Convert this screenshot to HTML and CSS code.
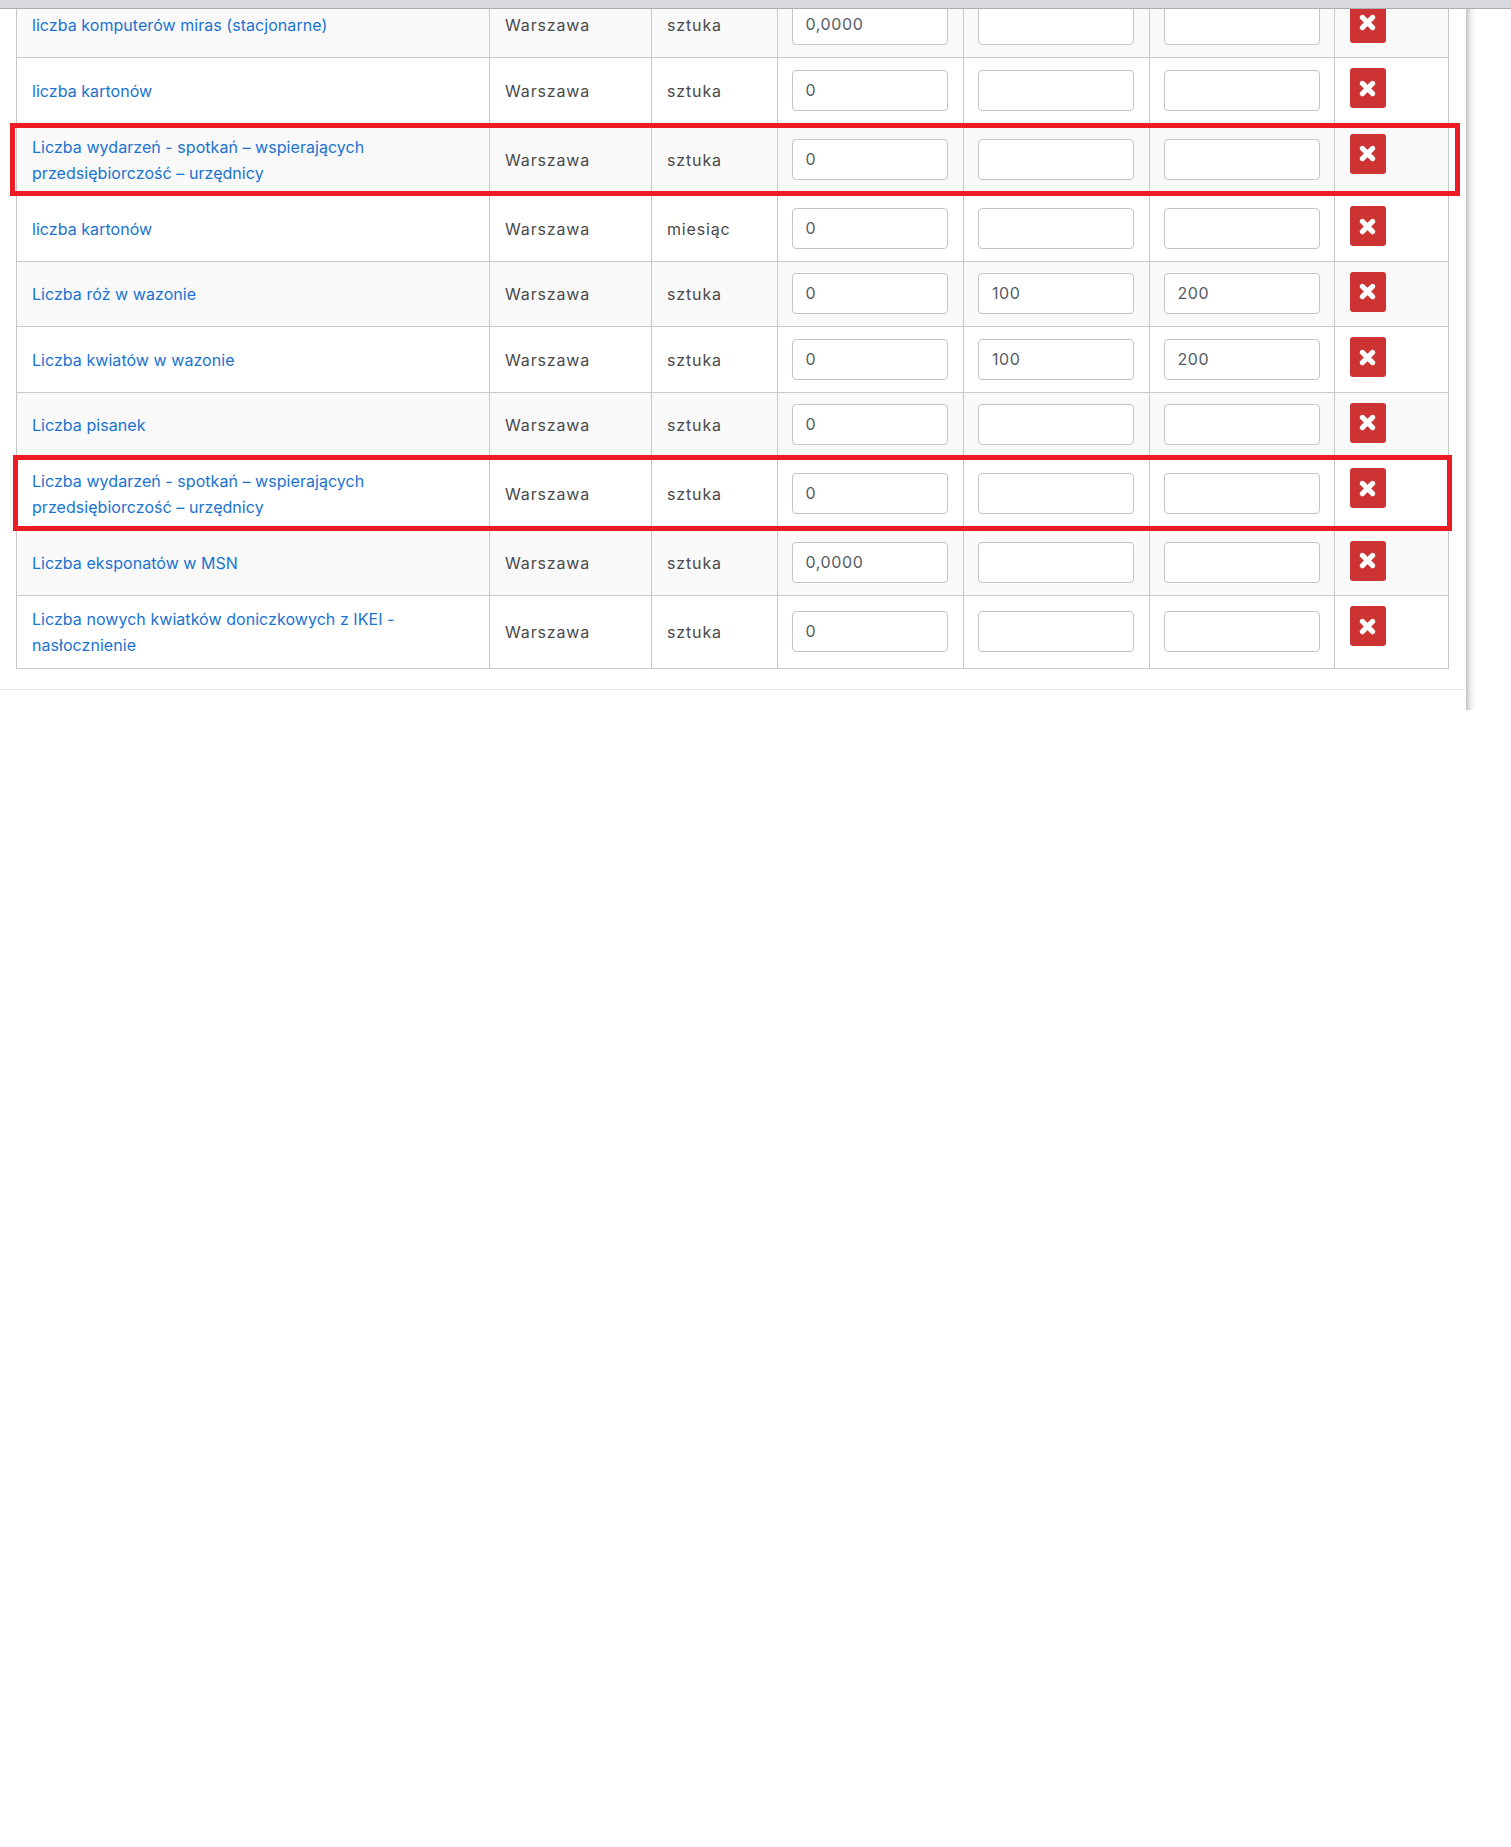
FILE: index.html
```html
<!DOCTYPE html>
<html lang="pl">
<head>
<meta charset="utf-8">
<title>Wskaźniki</title>
<link rel="stylesheet" href="styles.css">
</head>
<body>
<svg class="defs" width="0" height="0" aria-hidden="true"><symbol id="x" viewBox="0 0 16 16"><path d="M3.2 3.2 12.8 12.8M12.8 3.2 3.2 12.8" fill="none" stroke="#fff" stroke-width="4.8" stroke-linecap="round"/></symbol></svg>
<div class="topbar"></div>
<main class="card">
  <table class="grid">
    <colgroup><col class="c-name"><col class="c-city"><col class="c-unit"><col class="c-val"><col class="c-min"><col class="c-max"><col class="c-act"></colgroup>
    <tbody>
      <tr><td><a href="#">liczba komputerów miras (stacjonarne)</a></td><td>Warszawa</td><td>sztuka</td><td><input value="0,0000"></td><td><input></td><td><input></td><td class="act"><button type="button"><svg><use href="#x"/></svg></button></td></tr>
      <tr><td><a href="#">liczba kartonów</a></td><td>Warszawa</td><td>sztuka</td><td><input value="0"></td><td><input></td><td><input></td><td class="act"><button type="button"><svg><use href="#x"/></svg></button></td></tr>
      <tr class="two"><td><a href="#">Liczba wydarzeń - spotkań – wspierających przedsiębiorczość – urzędnicy</a></td><td>Warszawa</td><td>sztuka</td><td><input value="0"></td><td><input></td><td><input></td><td class="act"><button type="button"><svg><use href="#x"/></svg></button></td></tr>
      <tr><td><a href="#">liczba kartonów</a></td><td>Warszawa</td><td>miesiąc</td><td><input value="0"></td><td><input></td><td><input></td><td class="act"><button type="button"><svg><use href="#x"/></svg></button></td></tr>
      <tr><td><a href="#">Liczba róż w wazonie</a></td><td>Warszawa</td><td>sztuka</td><td><input value="0"></td><td><input value="100"></td><td><input value="200"></td><td class="act"><button type="button"><svg><use href="#x"/></svg></button></td></tr>
      <tr><td><a href="#">Liczba kwiatów w wazonie</a></td><td>Warszawa</td><td>sztuka</td><td><input value="0"></td><td><input value="100"></td><td><input value="200"></td><td class="act"><button type="button"><svg><use href="#x"/></svg></button></td></tr>
      <tr><td><a href="#">Liczba pisanek</a></td><td>Warszawa</td><td>sztuka</td><td><input value="0"></td><td><input></td><td><input></td><td class="act"><button type="button"><svg><use href="#x"/></svg></button></td></tr>
      <tr class="two"><td><a href="#">Liczba wydarzeń - spotkań – wspierających przedsiębiorczość – urzędnicy</a></td><td>Warszawa</td><td>sztuka</td><td><input value="0"></td><td><input></td><td><input></td><td class="act"><button type="button"><svg><use href="#x"/></svg></button></td></tr>
      <tr><td><a href="#">Liczba eksponatów w MSN</a></td><td>Warszawa</td><td>sztuka</td><td><input value="0,0000"></td><td><input></td><td><input></td><td class="act"><button type="button"><svg><use href="#x"/></svg></button></td></tr>
      <tr class="two"><td><a href="#">Liczba nowych kwiatków doniczkowych z IKEI - nasłocznienie</a></td><td>Warszawa</td><td>sztuka</td><td><input value="0"></td><td><input></td><td><input></td><td class="act"><button type="button"><svg><use href="#x"/></svg></button></td></tr>
    </tbody>
  </table>
  <div class="foot"></div>
  <div class="mark mark-a"></div>
  <div class="mark mark-b"></div>
</main>
</body>
</html>
```
FILE: styles.css
```css
html, body {
  margin: 0;
  padding: 0;
  background: #fff;
}
body {
  min-height: 1847px;
  font-family: Inter, "Open Sans", sans-serif;
  font-size: 16px;
  line-height: 26px;
  color: #4a4a4a;
}
.defs {
  position: absolute;
}
.topbar {
  position: relative;
  z-index: 2;
  height: 8px;
  background: #d8d9de;
  border-bottom: 1px solid #adaeb3;
}
.card {
  display: flow-root;
  position: relative;
  width: 1466px;
  height: 701px;
  background: #fff;
}
.card::after {
  content: "";
  position: absolute;
  left: 100%;
  top: 0;
  bottom: 0;
  width: 10px;
  background: linear-gradient(to right, #c4c4c4, #f0f0f0 50%, #fff);
}
.grid {
  border-collapse: collapse;
  table-layout: fixed;
  width: 1432px;
  margin: -17.4px 0 0 16px;
  letter-spacing: 0.85px;
}
.c-name { width: 472.5px; }
.c-city { width: 162px; }
.c-unit { width: 126px; }
.c-val { width: 186.5px; }
.c-min { width: 185.5px; }
.c-max { width: 185px; }
.c-act { width: 114.5px; }
.grid tr {
  height: 65.5px;
}
.grid tr.two {
  height: 72.5px;
}
.grid tr:nth-child(odd) {
  background: #f9f9f9;
}
.grid td {
  border: 1px solid #c8c8c8;
  padding: 9px 15px 8px 15.5px;
  vertical-align: middle;
}
.grid td:first-child {
  padding-left: 15px;
}
.grid td:nth-child(n+4) {
  padding: 10px 14px;
}
.grid a {
  color: #1a73d1;
  text-decoration: none;
  letter-spacing: 0.05px;
}
.grid input {
  display: block;
  box-sizing: border-box;
  width: 156px;
  height: 41px;
  margin: 0;
  padding: 0 13px 1px;
  border: 1px solid #c2c5ca;
  border-radius: 4px;
  background: #fff;
  font: inherit;
  letter-spacing: 0.6px;
  color: #555b66;
}
.grid td.act {
  vertical-align: top;
  padding: 10px 15px;
}
.act button {
  display: flex;
  align-items: center;
  justify-content: center;
  width: 36px;
  height: 40px;
  padding: 0;
  border: 0;
  border-radius: 3px;
  background: #cd3333;
}
.act svg {
  display: block;
  width: 17px;
  height: 17px;
}
.foot {
  margin-top: 20px;
  border-top: 1px solid #e5e5e5;
}
.mark {
  position: absolute;
  box-sizing: border-box;
  border: 5px solid #ed1c24;
}
.mark-a {
  left: 10px;
  top: 114px;
  width: 1450px;
  height: 73px;
}
.mark-b {
  left: 13px;
  top: 446px;
  width: 1439px;
  height: 76px;
}
```
